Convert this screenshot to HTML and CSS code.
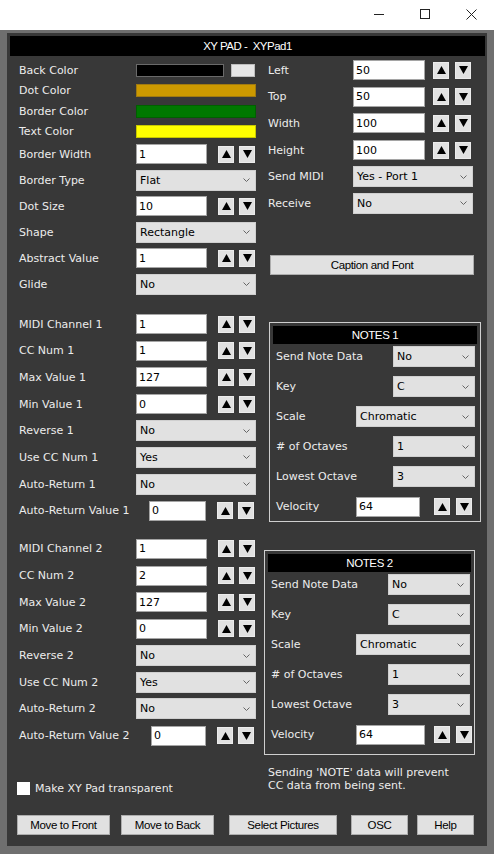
FILE: index.html
```html
<!DOCTYPE html>
<html lang="en">
<head>
    <meta charset="UTF-8">
    <title>XY PAD - XYPad1</title>
    <link rel="stylesheet" href="styles.css">
</head>
<body>
<div class="window">
    <div class="titlebar">
        <div class="titlebar-btn">
            <svg width="10" height="1" viewBox="0 0 10 1"><path d="M0 0.5H10" stroke="#222" stroke-width="1"/></svg>
        </div>
        <div class="titlebar-btn">
            <svg width="10" height="10" viewBox="0 0 10 10"><rect x="0.5" y="0.5" width="9" height="9" fill="none" stroke="#222" stroke-width="1"/></svg>
        </div>
        <div class="titlebar-btn">
            <svg width="11" height="11" viewBox="0 0 11 11"><path d="M0.5 0.5L10.5 10.5M10.5 0.5L0.5 10.5" stroke="#222" stroke-width="1"/></svg>
        </div>
    </div>

    <div class="frame">
        <div class="panel">
            <div class="panel-title">XY PAD -  XYPad1</div>

            <div class="content">
                <!-- left column -->
                <div class="col">
                    <div class="group colors">
                        <div class="row row-color">
                            <span class="label">Back Color</span>
                            <span class="swatch swatch-back"></span>
                            <span class="swatch-reset"></span>
                        </div>
                        <div class="row row-color">
                            <span class="label">Dot Color</span>
                            <span class="swatch swatch-dot"></span>
                        </div>
                        <div class="row row-color">
                            <span class="label">Border Color</span>
                            <span class="swatch swatch-border"></span>
                        </div>
                        <div class="row row-color">
                            <span class="label">Text Color</span>
                            <span class="swatch swatch-text"></span>
                        </div>
                    </div>

                    <div class="group group-a">
                        <div class="row">
                            <span class="label">Border Width</span>
                            <input class="field" type="text" value="1">
                            <div class="spinner">
                                <button class="spin"><svg width="9" height="8" viewBox="0 0 9 8"><path d="M4.5 0L9 8H0Z"/></svg></button>
                                <button class="spin"><svg width="9" height="8" viewBox="0 0 9 8"><path d="M0 0H9L4.5 8Z"/></svg></button>
                            </div>
                        </div>
                        <div class="row">
                            <span class="label">Border Type</span>
                            <div class="select"><span>Flat</span><svg class="chev" width="7" height="4" viewBox="0 0 7 4"><path d="M0.5 0.5L3.5 3.5L6.5 0.5" fill="none" stroke="#666"/></svg></div>
                        </div>
                        <div class="row">
                            <span class="label">Dot Size</span>
                            <input class="field" type="text" value="10">
                            <div class="spinner">
                                <button class="spin"><svg width="9" height="8" viewBox="0 0 9 8"><path d="M4.5 0L9 8H0Z"/></svg></button>
                                <button class="spin"><svg width="9" height="8" viewBox="0 0 9 8"><path d="M0 0H9L4.5 8Z"/></svg></button>
                            </div>
                        </div>
                        <div class="row">
                            <span class="label">Shape</span>
                            <div class="select"><span>Rectangle</span><svg class="chev" width="7" height="4" viewBox="0 0 7 4"><path d="M0.5 0.5L3.5 3.5L6.5 0.5" fill="none" stroke="#666"/></svg></div>
                        </div>
                        <div class="row">
                            <span class="label">Abstract Value</span>
                            <input class="field" type="text" value="1">
                            <div class="spinner">
                                <button class="spin"><svg width="9" height="8" viewBox="0 0 9 8"><path d="M4.5 0L9 8H0Z"/></svg></button>
                                <button class="spin"><svg width="9" height="8" viewBox="0 0 9 8"><path d="M0 0H9L4.5 8Z"/></svg></button>
                            </div>
                        </div>
                        <div class="row">
                            <span class="label">Glide</span>
                            <div class="select"><span>No</span><svg class="chev" width="7" height="4" viewBox="0 0 7 4"><path d="M0.5 0.5L3.5 3.5L6.5 0.5" fill="none" stroke="#666"/></svg></div>
                        </div>
                    </div>

                    <div class="group group-midi">
                        <div class="row">
                            <span class="label">MIDI Channel 1</span>
                            <input class="field" type="text" value="1">
                            <div class="spinner">
                                <button class="spin"><svg width="9" height="8" viewBox="0 0 9 8"><path d="M4.5 0L9 8H0Z"/></svg></button>
                                <button class="spin"><svg width="9" height="8" viewBox="0 0 9 8"><path d="M0 0H9L4.5 8Z"/></svg></button>
                            </div>
                        </div>
                        <div class="row">
                            <span class="label">CC Num 1</span>
                            <input class="field" type="text" value="1">
                            <div class="spinner">
                                <button class="spin"><svg width="9" height="8" viewBox="0 0 9 8"><path d="M4.5 0L9 8H0Z"/></svg></button>
                                <button class="spin"><svg width="9" height="8" viewBox="0 0 9 8"><path d="M0 0H9L4.5 8Z"/></svg></button>
                            </div>
                        </div>
                        <div class="row">
                            <span class="label">Max Value 1</span>
                            <input class="field" type="text" value="127">
                            <div class="spinner">
                                <button class="spin"><svg width="9" height="8" viewBox="0 0 9 8"><path d="M4.5 0L9 8H0Z"/></svg></button>
                                <button class="spin"><svg width="9" height="8" viewBox="0 0 9 8"><path d="M0 0H9L4.5 8Z"/></svg></button>
                            </div>
                        </div>
                        <div class="row">
                            <span class="label">Min Value 1</span>
                            <input class="field" type="text" value="0">
                            <div class="spinner">
                                <button class="spin"><svg width="9" height="8" viewBox="0 0 9 8"><path d="M4.5 0L9 8H0Z"/></svg></button>
                                <button class="spin"><svg width="9" height="8" viewBox="0 0 9 8"><path d="M0 0H9L4.5 8Z"/></svg></button>
                            </div>
                        </div>
                        <div class="row">
                            <span class="label">Reverse 1</span>
                            <div class="select"><span>No</span><svg class="chev" width="7" height="4" viewBox="0 0 7 4"><path d="M0.5 0.5L3.5 3.5L6.5 0.5" fill="none" stroke="#666"/></svg></div>
                        </div>
                        <div class="row">
                            <span class="label">Use CC Num 1</span>
                            <div class="select"><span>Yes</span><svg class="chev" width="7" height="4" viewBox="0 0 7 4"><path d="M0.5 0.5L3.5 3.5L6.5 0.5" fill="none" stroke="#666"/></svg></div>
                        </div>
                        <div class="row">
                            <span class="label">Auto-Return 1</span>
                            <div class="select"><span>No</span><svg class="chev" width="7" height="4" viewBox="0 0 7 4"><path d="M0.5 0.5L3.5 3.5L6.5 0.5" fill="none" stroke="#666"/></svg></div>
                        </div>
                        <div class="row">
                            <span class="label label-long">Auto-Return Value 1</span>
                            <input class="field field-short" type="text" value="0">
                            <div class="spinner">
                                <button class="spin"><svg width="9" height="8" viewBox="0 0 9 8"><path d="M4.5 0L9 8H0Z"/></svg></button>
                                <button class="spin"><svg width="9" height="8" viewBox="0 0 9 8"><path d="M0 0H9L4.5 8Z"/></svg></button>
                            </div>
                        </div>
                    </div>

                    <div class="group group-midi group-midi-2">
                        <div class="row">
                            <span class="label">MIDI Channel 2</span>
                            <input class="field" type="text" value="1">
                            <div class="spinner">
                                <button class="spin"><svg width="9" height="8" viewBox="0 0 9 8"><path d="M4.5 0L9 8H0Z"/></svg></button>
                                <button class="spin"><svg width="9" height="8" viewBox="0 0 9 8"><path d="M0 0H9L4.5 8Z"/></svg></button>
                            </div>
                        </div>
                        <div class="row">
                            <span class="label">CC Num 2</span>
                            <input class="field" type="text" value="2">
                            <div class="spinner">
                                <button class="spin"><svg width="9" height="8" viewBox="0 0 9 8"><path d="M4.5 0L9 8H0Z"/></svg></button>
                                <button class="spin"><svg width="9" height="8" viewBox="0 0 9 8"><path d="M0 0H9L4.5 8Z"/></svg></button>
                            </div>
                        </div>
                        <div class="row">
                            <span class="label">Max Value 2</span>
                            <input class="field" type="text" value="127">
                            <div class="spinner">
                                <button class="spin"><svg width="9" height="8" viewBox="0 0 9 8"><path d="M4.5 0L9 8H0Z"/></svg></button>
                                <button class="spin"><svg width="9" height="8" viewBox="0 0 9 8"><path d="M0 0H9L4.5 8Z"/></svg></button>
                            </div>
                        </div>
                        <div class="row">
                            <span class="label">Min Value 2</span>
                            <input class="field" type="text" value="0">
                            <div class="spinner">
                                <button class="spin"><svg width="9" height="8" viewBox="0 0 9 8"><path d="M4.5 0L9 8H0Z"/></svg></button>
                                <button class="spin"><svg width="9" height="8" viewBox="0 0 9 8"><path d="M0 0H9L4.5 8Z"/></svg></button>
                            </div>
                        </div>
                        <div class="row">
                            <span class="label">Reverse 2</span>
                            <div class="select"><span>No</span><svg class="chev" width="7" height="4" viewBox="0 0 7 4"><path d="M0.5 0.5L3.5 3.5L6.5 0.5" fill="none" stroke="#666"/></svg></div>
                        </div>
                        <div class="row">
                            <span class="label">Use CC Num 2</span>
                            <div class="select"><span>Yes</span><svg class="chev" width="7" height="4" viewBox="0 0 7 4"><path d="M0.5 0.5L3.5 3.5L6.5 0.5" fill="none" stroke="#666"/></svg></div>
                        </div>
                        <div class="row">
                            <span class="label">Auto-Return 2</span>
                            <div class="select"><span>No</span><svg class="chev" width="7" height="4" viewBox="0 0 7 4"><path d="M0.5 0.5L3.5 3.5L6.5 0.5" fill="none" stroke="#666"/></svg></div>
                        </div>
                        <div class="row">
                            <span class="label label-long2">Auto-Return Value 2</span>
                            <input class="field field-short2" type="text" value="0">
                            <div class="spinner">
                                <button class="spin"><svg width="9" height="8" viewBox="0 0 9 8"><path d="M4.5 0L9 8H0Z"/></svg></button>
                                <button class="spin"><svg width="9" height="8" viewBox="0 0 9 8"><path d="M0 0H9L4.5 8Z"/></svg></button>
                            </div>
                        </div>
                    </div>

                    <div class="row check-row">
                        <span class="checkbox"></span>
                        <span>Make XY Pad transparent</span>
                    </div>
                </div>

                <!-- right column -->
                <div class="col col-right">
                    <div class="group group-pos">
                        <div class="row">
                            <span class="label label-right">Left</span>
                            <input class="field field-right" type="text" value="50">
                            <div class="spinner spinner-right">
                                <button class="spin"><svg width="9" height="8" viewBox="0 0 9 8"><path d="M4.5 0L9 8H0Z"/></svg></button>
                                <button class="spin"><svg width="9" height="8" viewBox="0 0 9 8"><path d="M0 0H9L4.5 8Z"/></svg></button>
                            </div>
                        </div>
                        <div class="row">
                            <span class="label label-right">Top</span>
                            <input class="field field-right" type="text" value="50">
                            <div class="spinner spinner-right">
                                <button class="spin"><svg width="9" height="8" viewBox="0 0 9 8"><path d="M4.5 0L9 8H0Z"/></svg></button>
                                <button class="spin"><svg width="9" height="8" viewBox="0 0 9 8"><path d="M0 0H9L4.5 8Z"/></svg></button>
                            </div>
                        </div>
                        <div class="row">
                            <span class="label label-right">Width</span>
                            <input class="field field-right" type="text" value="100">
                            <div class="spinner spinner-right">
                                <button class="spin"><svg width="9" height="8" viewBox="0 0 9 8"><path d="M4.5 0L9 8H0Z"/></svg></button>
                                <button class="spin"><svg width="9" height="8" viewBox="0 0 9 8"><path d="M0 0H9L4.5 8Z"/></svg></button>
                            </div>
                        </div>
                        <div class="row">
                            <span class="label label-right">Height</span>
                            <input class="field field-right" type="text" value="100">
                            <div class="spinner spinner-right">
                                <button class="spin"><svg width="9" height="8" viewBox="0 0 9 8"><path d="M4.5 0L9 8H0Z"/></svg></button>
                                <button class="spin"><svg width="9" height="8" viewBox="0 0 9 8"><path d="M0 0H9L4.5 8Z"/></svg></button>
                            </div>
                        </div>
                        <div class="row">
                            <span class="label label-right">Send MIDI</span>
                            <div class="select"><span>Yes - Port 1</span><svg class="chev" width="7" height="4" viewBox="0 0 7 4"><path d="M0.5 0.5L3.5 3.5L6.5 0.5" fill="none" stroke="#666"/></svg></div>
                        </div>
                        <div class="row">
                            <span class="label label-right">Receive</span>
                            <div class="select"><span>No</span><svg class="chev" width="7" height="4" viewBox="0 0 7 4"><path d="M0.5 0.5L3.5 3.5L6.5 0.5" fill="none" stroke="#666"/></svg></div>
                        </div>
                    </div>

                    <button class="btn btn-caption">Caption and Font</button>

                    <div class="notes notes-1">
                        <div class="notes-title">NOTES 1</div>
                        <div class="notes-row">
                            <span class="notes-label">Send Note Data</span>
                            <div class="select select-small"><span>No</span><svg class="chev" width="7" height="4" viewBox="0 0 7 4"><path d="M0.5 0.5L3.5 3.5L6.5 0.5" fill="none" stroke="#666"/></svg></div>
                        </div>
                        <div class="notes-row">
                            <span class="notes-label">Key</span>
                            <div class="select select-small"><span>C</span><svg class="chev" width="7" height="4" viewBox="0 0 7 4"><path d="M0.5 0.5L3.5 3.5L6.5 0.5" fill="none" stroke="#666"/></svg></div>
                        </div>
                        <div class="notes-row">
                            <span class="notes-label">Scale</span>
                            <div class="select select-fill"><span>Chromatic</span><svg class="chev" width="7" height="4" viewBox="0 0 7 4"><path d="M0.5 0.5L3.5 3.5L6.5 0.5" fill="none" stroke="#666"/></svg></div>
                        </div>
                        <div class="notes-row">
                            <span class="notes-label"># of Octaves</span>
                            <div class="select select-small"><span>1</span><svg class="chev" width="7" height="4" viewBox="0 0 7 4"><path d="M0.5 0.5L3.5 3.5L6.5 0.5" fill="none" stroke="#666"/></svg></div>
                        </div>
                        <div class="notes-row">
                            <span class="notes-label">Lowest Octave</span>
                            <div class="select select-small"><span>3</span><svg class="chev" width="7" height="4" viewBox="0 0 7 4"><path d="M0.5 0.5L3.5 3.5L6.5 0.5" fill="none" stroke="#666"/></svg></div>
                        </div>
                        <div class="notes-row">
                            <span class="notes-label">Velocity</span>
                            <input class="field field-velocity" type="text" value="64">
                            <div class="spinner spinner-notes">
                                <button class="spin"><svg width="9" height="8" viewBox="0 0 9 8"><path d="M4.5 0L9 8H0Z"/></svg></button>
                                <button class="spin"><svg width="9" height="8" viewBox="0 0 9 8"><path d="M0 0H9L4.5 8Z"/></svg></button>
                            </div>
                        </div>
                    </div>

                    <div class="notes notes-2">
                        <div class="notes-title">NOTES 2</div>
                        <div class="notes-row">
                            <span class="notes-label">Send Note Data</span>
                            <div class="select select-small"><span>No</span><svg class="chev" width="7" height="4" viewBox="0 0 7 4"><path d="M0.5 0.5L3.5 3.5L6.5 0.5" fill="none" stroke="#666"/></svg></div>
                        </div>
                        <div class="notes-row">
                            <span class="notes-label">Key</span>
                            <div class="select select-small"><span>C</span><svg class="chev" width="7" height="4" viewBox="0 0 7 4"><path d="M0.5 0.5L3.5 3.5L6.5 0.5" fill="none" stroke="#666"/></svg></div>
                        </div>
                        <div class="notes-row">
                            <span class="notes-label">Scale</span>
                            <div class="select select-fill"><span>Chromatic</span><svg class="chev" width="7" height="4" viewBox="0 0 7 4"><path d="M0.5 0.5L3.5 3.5L6.5 0.5" fill="none" stroke="#666"/></svg></div>
                        </div>
                        <div class="notes-row">
                            <span class="notes-label"># of Octaves</span>
                            <div class="select select-small"><span>1</span><svg class="chev" width="7" height="4" viewBox="0 0 7 4"><path d="M0.5 0.5L3.5 3.5L6.5 0.5" fill="none" stroke="#666"/></svg></div>
                        </div>
                        <div class="notes-row">
                            <span class="notes-label">Lowest Octave</span>
                            <div class="select select-small"><span>3</span><svg class="chev" width="7" height="4" viewBox="0 0 7 4"><path d="M0.5 0.5L3.5 3.5L6.5 0.5" fill="none" stroke="#666"/></svg></div>
                        </div>
                        <div class="notes-row">
                            <span class="notes-label">Velocity</span>
                            <input class="field field-velocity" type="text" value="64">
                            <div class="spinner spinner-notes">
                                <button class="spin"><svg width="9" height="8" viewBox="0 0 9 8"><path d="M4.5 0L9 8H0Z"/></svg></button>
                                <button class="spin"><svg width="9" height="8" viewBox="0 0 9 8"><path d="M0 0H9L4.5 8Z"/></svg></button>
                            </div>
                        </div>
                    </div>

                    <p class="note-text">Sending 'NOTE' data will prevent<br>CC data from being sent.</p>
                </div>
            </div>

            <div class="buttons">
                <button class="btn btn-front">Move to Front</button>
                <button class="btn btn-back">Move to Back</button>
                <button class="btn btn-pictures">Select Pictures</button>
                <button class="btn btn-osc">OSC</button>
                <button class="btn btn-help">Help</button>
            </div>
        </div>
    </div>
</div>
</body>
</html>
```

FILE: styles.css
```css
* {
    box-sizing: border-box;
}

body {
    margin: 0;
    background-color: #fff;
    font-family: "DejaVu Sans", Verdana, sans-serif;
    font-size: 11px;
}

.window {
    width: 494px;
}

/* window caption */
.titlebar {
    height: 30px;
    display: flex;
    justify-content: flex-end;
    background-color: #fff;
}

.titlebar-btn {
    width: 46px;
    display: flex;
    align-items: center;
    justify-content: center;
    padding-bottom: 2px;
}

.frame {
    background-color: #6f6f6f;
    padding: 3px 7px 8px;
}

.panel {
    background-color: #383838;
    padding: 3px 2px 0 3px;
    height: 813px;
}

.panel-title,
.notes-title {
    background-color: #000;
    color: #fff;
    text-align: center;
    white-space: pre;
    font-family: "Liberation Sans", Arial, sans-serif;
    font-size: 11.5px;
    letter-spacing: -0.4px;
}

.panel-title {
    height: 20px;
    line-height: 20px;
    letter-spacing: -0.5px;
}

.content {
    display: grid;
    grid-template-columns: 240px 218px;
    column-gap: 7px;
    margin: 4px 0 0 7px;
}

.col {
    display: flex;
    flex-direction: column;
}

.group {
    display: flex;
    flex-direction: column;
    gap: 6.7px;
}

.group.colors {
    gap: 0;
}

.group-a {
    gap: 6px;
    margin-top: 2px;
}

.group-midi {
    margin-top: 20px;
}

.group-midi-2 {
    margin-top: 18px;
}

.row {
    display: flex;
    align-items: center;
    height: 20px;
    color: #ececec;
}

.row-color {
    height: 20.5px;
}

.label {
    flex: 0 0 119px;
    padding-left: 2px;
    white-space: nowrap;
}

.label-long {
    flex-basis: 132px;
}

.label-long2 {
    flex-basis: 134px;
}

.label-right {
    flex-basis: 89px;
    padding-left: 4px;
}

/* colour pickers */
.swatch {
    width: 120px;
    height: 13px;
    border: 1px solid #6a6a6a;
}

.swatch-back {
    width: 88px;
    background-color: #000;
}

.swatch-reset {
    width: 24px;
    height: 13px;
    margin-left: 7px;
    background-color: #e6e6e6;
    border: 1px solid #bdbdbd;
}

.swatch-dot {
    background-color: #cc9900;
    border-color: #a07a10;
}

.swatch-border {
    background-color: #007800;
    border-color: #006000;
}

.swatch-text {
    background-color: #ffff00;
    border-color: #c8c800;
}

/* text inputs */
.field {
    width: 71px;
    height: 20px;
    margin: 0;
    padding: 0 2px;
    border: 1px solid #a5a5a5;
    background-color: #fff;
    color: #000;
    font-family: inherit;
    font-size: 11px;
    outline: none;
}

.field-short {
    width: 57px;
}

.field-short2 {
    width: 55px;
}

.field-right {
    width: 72px;
}

.spinner {
    display: flex;
    gap: 5px;
    margin-left: 11px;
}

.spinner-right {
    gap: 6px;
    margin-left: 8px;
}

.spin {
    width: 16px;
    height: 17px;
    padding: 0;
    border: 1px solid #ececec;
    background-color: #e1e1e1;
    display: flex;
    align-items: center;
    justify-content: center;
}

.spin svg {
    fill: #000;
}

/* combo boxes */
.select {
    width: 120px;
    height: 21px;
    display: flex;
    align-items: center;
    justify-content: space-between;
    padding: 0 5px 0 3px;
    border: 1px solid #cfcfcf;
    background-color: #e1e1e1;
    color: #000;
    white-space: nowrap;
}

.chev {
    flex-shrink: 0;
}

/* buttons */
.btn {
    height: 20px;
    padding: 0;
    border: 1px solid #adadad;
    background-color: #e1e1e1;
    color: #000;
    font-family: "Liberation Sans", Arial, sans-serif;
    font-size: 11.5px;
    letter-spacing: -0.35px;
}

.btn-caption {
    width: 204px;
    margin: 42px 0 0 6px;
}

/* note groups */
.notes {
    --label-w: 83px;
    --edge: 2px;
    --spin-edge: 5px;
    border: 1px solid #cfcfcf;
    padding: 3px 3px 4px;
}

.notes-1 {
    width: 212px;
    margin: 47px 0 0 5px;
}

.notes-2 {
    --label-w: 88px;
    --edge: 1px;
    --spin-edge: -1px;
    width: 211px;
    margin-top: 28px;
    padding-bottom: 9px;
}

.notes-title {
    height: 18px;
    line-height: 18px;
}

.notes-row {
    display: flex;
    align-items: center;
    height: 21px;
    margin-top: 9px;
    color: #ececec;
}

.notes-title + .notes-row {
    margin-top: 2px;
}

.notes-label {
    flex: 0 0 var(--label-w);
    padding-left: 3px;
    white-space: nowrap;
}

.select-small {
    width: 82px;
    margin: 0 var(--edge) 0 auto;
}

.select-fill {
    flex: 1;
    width: auto;
    margin-right: var(--edge);
}

.field-velocity {
    width: 64px;
}

.notes-2 .field-velocity {
    width: 69px;
}

.spinner-notes {
    gap: 6px;
    margin: 0 var(--spin-edge) 0 auto;
}

.note-text {
    margin: 11px 0 0;
    padding-left: 4px;
    line-height: 13px;
    color: #ececec;
}

.check-row {
    margin-top: 33px;
}

.checkbox {
    width: 13px;
    height: 13px;
    margin-right: 5px;
    background-color: #fff;
}

.buttons {
    display: flex;
    margin: 16px 0 0 7px;
}

.btn-front,
.btn-back {
    width: 93px;
}

.btn-back {
    margin-left: 11px;
}

.btn-pictures {
    width: 108px;
    margin-left: 15px;
}

.btn-osc {
    width: 57px;
    margin-left: 14px;
}

.btn-help {
    width: 57px;
    margin-left: 9px;
}
```
